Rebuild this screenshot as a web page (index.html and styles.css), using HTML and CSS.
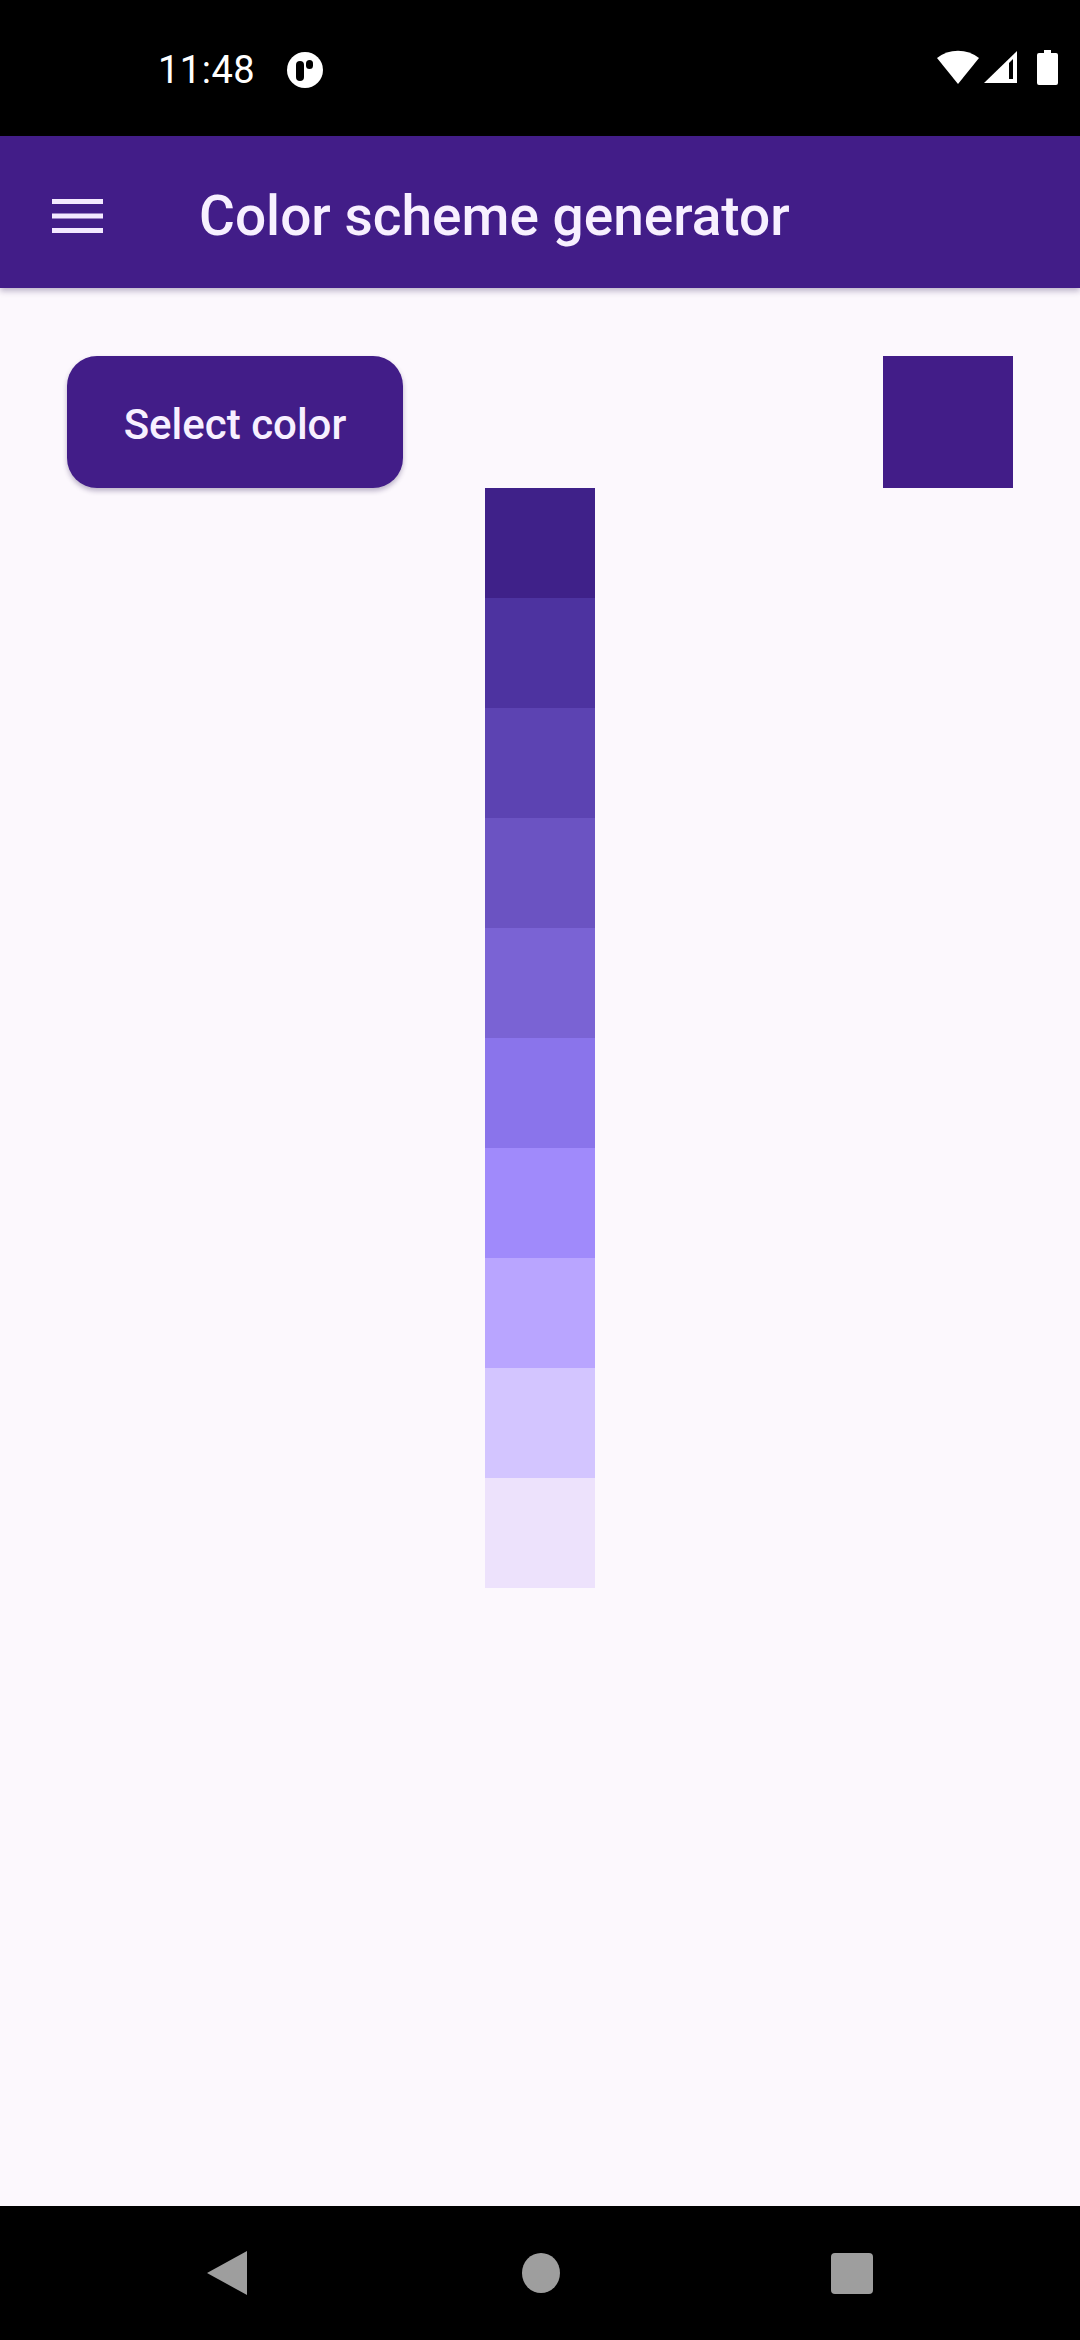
FILE: index.html
```html
<!DOCTYPE html>
<html lang="en">

<head>
	<meta charset="utf-8">
	<meta name="viewport" content="width=device-width, initial-scale=1">
	<title>Color scheme generator</title>
	<link rel="stylesheet" href="styles.css">
</head>

<body>
	<div class="status-bar">
		<div class="status-left">
			<span class="clock">11:48</span>
			<svg class="notif" viewBox="0 0 36 36">
				<circle cx="18" cy="18" r="18" fill="#FFFFFF"></circle>
				<rect x="9" y="9" width="8" height="20" rx="4" fill="#000000"></rect>
				<rect x="19" y="8" width="7" height="9" rx="3.5" fill="#000000"></rect>
			</svg>
		</div>
		<div class="status-right">
			<svg class="wifi" viewBox="0 0 42 34">
				<path d="M21,34L0,8A34 34 0 0 1 42 8z" fill="#FFFFFF"></path>
			</svg>
			<svg class="signal" viewBox="0 0 33 32">
				<path d="M0,32L33,0V32z" fill="#FFFFFF"></path>
				<path d="M25,12V28H29V8z" fill="#000000"></path>
			</svg>
			<svg class="battery" viewBox="0 0 21 35">
				<path d="M7,0H14V3H19A2 2 0 0 1 21 5V33A2 2 0 0 1 19 35H2A2 2 0 0 1 0 33V5A2 2 0 0 1 2 3H7z" fill="#FFFFFF"></path>
			</svg>
		</div>
	</div>

	<header class="app-bar">
		<svg class="menu" viewBox="0 0 51 34">
			<rect x="0" y="0" width="51" height="5"></rect>
			<rect x="0" y="14.5" width="51" height="5"></rect>
			<rect x="0" y="29" width="51" height="5"></rect>
		</svg>
		<h1 class="title">Color scheme generator</h1>
	</header>

	<main class="content">
		<div class="controls">
			<button class="select-btn">Select color</button>
			<div class="picked"></div>
		</div>
		<div class="scheme">
			<div class="tone tone-1"></div>
			<div class="tone tone-2"></div>
			<div class="tone tone-3"></div>
			<div class="tone tone-4"></div>
			<div class="tone tone-5"></div>
			<div class="tone tone-6"></div>
			<div class="tone tone-7"></div>
			<div class="tone tone-8"></div>
			<div class="tone tone-9"></div>
			<div class="tone tone-10"></div>
		</div>
	</main>

	<nav class="nav-bar">
		<svg class="nav-back" viewBox="0 0 40 44">
			<path d="M40,0V44L0,22z" fill="#9E9E9E"></path>
		</svg>
		<svg class="nav-home" viewBox="0 0 38 40">
			<ellipse cx="19" cy="20" rx="19" ry="20" fill="#9E9E9E"></ellipse>
		</svg>
		<svg class="nav-recent" viewBox="0 0 42 41">
			<rect x="0" y="0" width="42" height="41" rx="4" fill="#9E9E9E"></rect>
		</svg>
	</nav>
</body>

</html>
```

FILE: styles.css
```css
html,
body {
	height: 100%;
}

body {
	background-color: #FCF8FD;
	box-sizing: border-box;
	display: flex;
	flex-direction: column;
	font-family: Roboto, "Noto Sans", sans-serif;
	height: 2340px;
	margin: 0;
	width: 1080px;
}

.status-bar {
	align-items: center;
	background-color: #000000;
	box-sizing: border-box;
	color: #FFFFFF;
	display: flex;
	flex-shrink: 0;
	height: 136px;
	justify-content: space-between;
	padding: 0 22px 2px 158px;
}

.status-left,
.status-right {
	align-items: center;
	display: flex;
}

.status-left {
	padding-top: 6px;
}

.clock {
	font-size: 38px;
	letter-spacing: 0.5px;
}

.notif {
	height: 36px;
	margin-left: 32px;
	width: 36px;
}

.wifi {
	height: 34px;
	width: 42px;
}

.signal {
	height: 32px;
	margin-left: 5px;
	width: 33px;
}

.battery {
	height: 35px;
	margin-left: 20px;
	width: 21px;
}

.app-bar {
	align-items: center;
	background-color: #421D88;
	box-shadow: 0 3px 6px rgba(40, 20, 80, 0.3);
	box-sizing: border-box;
	display: flex;
	flex-shrink: 0;
	height: 152px;
	padding: 8px 0 0 52px;
	position: relative;
}

.menu {
	fill: #F3E9FF;
	height: 34px;
	width: 51px;
}

.title {
	color: #F7F0FF;
	font-size: 55px;
	font-weight: 500;
	margin: 0 0 0 96px;
}

.content {
	display: flex;
	flex-direction: column;
	flex-grow: 1;
	padding-top: 68px;
}

.controls {
	align-items: flex-start;
	display: flex;
	justify-content: space-between;
	padding: 0 67px;
}

.select-btn {
	background-color: #421D88;
	border: none;
	border-radius: 30px;
	box-shadow: 0 3px 5px rgba(40, 20, 80, 0.3);
	color: #F7F0FF;
	font-family: Roboto, "Noto Sans", sans-serif;
	font-size: 42px;
	font-weight: 500;
	height: 132px;
	padding: 4px 0 0;
	width: 336px;
}

.picked {
	background-color: #421D88;
	height: 132px;
	width: 130px;
}

.scheme {
	align-self: center;
	display: flex;
	flex-direction: column;
	width: 110px;
}

.tone {
	height: 110px;
}

.tone-1 { background-color: #3F2189; }
.tone-2 { background-color: #4D33A0; }
.tone-3 { background-color: #5C43B2; }
.tone-4 { background-color: #6B53C2; }
.tone-5 { background-color: #7A63D4; }
.tone-6 { background-color: #8A74EB; }
.tone-7 { background-color: #A08AFB; }
.tone-8 { background-color: #B9A5FF; }
.tone-9 { background-color: #D3C5FF; }
.tone-10 { background-color: #EDE2FC; }

.nav-bar {
	align-items: center;
	background-color: #000000;
	display: flex;
	flex-shrink: 0;
	height: 134px;
	justify-content: center;
}

.nav-back,
.nav-home,
.nav-recent {
	flex-shrink: 0;
}

.nav-back {
	height: 44px;
	margin-right: 275px;
	width: 40px;
}

.nav-home {
	height: 40px;
	width: 38px;
}

.nav-recent {
	height: 41px;
	margin-left: 271px;
	width: 42px;
}
```
